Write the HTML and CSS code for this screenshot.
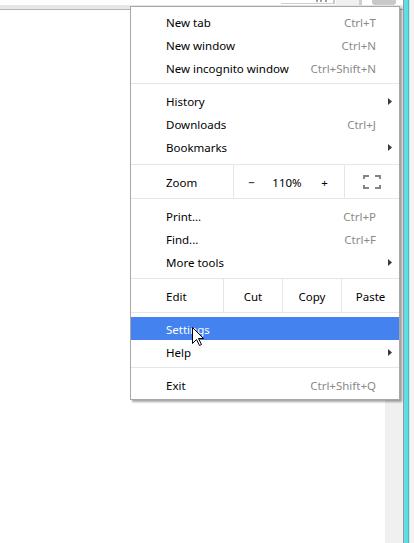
FILE: index.html
```html
<!DOCTYPE html>
<html>
<head>
<meta charset="utf-8">
<title>Menu</title>
<link rel="stylesheet" href="styles.css">
</head>
<body>
<div class="screen">
  <div class="toolbar">
    <div class="toolbar-top">
      <div class="omni-end">
        <svg class="dots" width="14" height="4" viewBox="0 0 14 4"><rect x="1" y="0" width="2" height="2"/><rect x="5" y="0" width="2" height="2"/><rect x="10" y="0" width="2" height="2"/></svg>
      </div>
      <div class="ext"></div>
      <div class="menu-btn"></div>
    </div>
    <div class="toolbar-band"></div>
  </div>
  <div class="body-area">
    <div class="content"></div>
    <div class="side-gray"></div>
  </div>
  <div class="teal"></div>
  <div class="side-edge"></div>
</div>

<div class="menu">
  <div class="item"><span class="label">New tab</span><span class="key">Ctrl+T</span><span class="sub"></span></div>
  <div class="item"><span class="label">New window</span><span class="key">Ctrl+N</span><span class="sub"></span></div>
  <div class="item"><span class="label">New incognito window</span><span class="key">Ctrl+Shift+N</span><span class="sub"></span></div>
  <div class="sep"></div>
  <div class="item"><span class="label">History</span><span class="key"></span><span class="sub"><svg class="arrow" width="4" height="7" viewBox="0 0 4 7"><polygon points="0,0 4,3.5 0,7"/></svg></span></div>
  <div class="item"><span class="label">Downloads</span><span class="key">Ctrl+J</span><span class="sub"></span></div>
  <div class="item"><span class="label">Bookmarks</span><span class="key"></span><span class="sub"><svg class="arrow" width="4" height="7" viewBox="0 0 4 7"><polygon points="0,0 4,3.5 0,7"/></svg></span></div>
  <div class="cellrow zoomrow">
    <div class="cell-label zoom-label">Zoom</div>
    <div class="zoomctl">
      <span class="zminus">−</span>
      <span class="zval">110%</span>
      <span class="zplus">+</span>
    </div>
    <div class="fullscreen">
      <svg width="18" height="14" viewBox="0 0 18 14">
        <path d="M0 0h6v2H2v2H0z M12 0h6v4h-2V2h-4z M18 14h-6v-2h4v-2h2z M0 14v-4h2v2h4v2z"/>
      </svg>
    </div>
  </div>
  <div class="item"><span class="label">Print...</span><span class="key">Ctrl+P</span><span class="sub"></span></div>
  <div class="item"><span class="label">Find...</span><span class="key">Ctrl+F</span><span class="sub"></span></div>
  <div class="item"><span class="label">More tools</span><span class="key"></span><span class="sub"><svg class="arrow" width="4" height="7" viewBox="0 0 4 7"><polygon points="0,0 4,3.5 0,7"/></svg></span></div>
  <div class="cellrow editrow">
    <div class="cell-label edit-label">Edit</div>
    <div class="ecell ecut">Cut</div>
    <div class="ecell ecopy">Copy</div>
    <div class="ecell epaste">Paste</div>
  </div>
  <div class="item selected"><span class="label">Settings</span><span class="key"></span><span class="sub"></span></div>
  <div class="item"><span class="label">Help</span><span class="key"></span><span class="sub"><svg class="arrow" width="4" height="7" viewBox="0 0 4 7"><polygon points="0,0 4,3.5 0,7"/></svg></span></div>
  <div class="sep"></div>
  <div class="item"><span class="label">Exit</span><span class="key">Ctrl+Shift+Q</span><span class="sub"></span></div>
</div>

<svg class="cursor" width="13" height="20" viewBox="0 0 13 20">
  <polygon points="0.5,0.5 0.5,16.5 4.5,12.5 7.5,18.5 9.5,17.5 6.5,11.5 11.5,11.5" fill="#fff" stroke="#000" stroke-width="1"/>
</svg>
</body>
</html>
```

FILE: styles.css
```css
* {
  box-sizing: border-box;
}

html, body {
  margin: 0;
  padding: 0;
  background: #ffffff;
}

body {
  width: 414px;
  height: 543px;
  overflow: hidden;
  position: relative;
  font-family: "Noto Sans", "Open Sans", sans-serif;
  font-size: 11.5px;
  color: #000;
}

.screen {
  display: grid;
  grid-template-columns: 403px 6px 5px;
  grid-template-rows: 10px 533px;
  width: 414px;
  height: 543px;
}

.toolbar {
  grid-column: 1;
  grid-row: 1;
  display: flex;
  flex-direction: column;
}

.toolbar-top {
  height: 5px;
  display: flex;
  justify-content: flex-end;
  padding-right: 7px;
  background: #ffffff;
}

.omni-end {
  width: 54px;
  height: 4px;
  border-bottom: 1px solid #cfcfcf;
  border-right: 2px solid #c8c8c8;
  display: flex;
  justify-content: flex-end;
  align-items: flex-start;
  padding-right: 4px;
}

.dots {
  display: block;
  fill: #a0a0a0;
}

.ext {
  width: 26px;
  height: 5px;
  background: #f0f0f0;
  border-right: 3px solid #cfcfcf;
  margin-left: 1px;
}

.menu-btn {
  width: 24px;
  height: 5px;
  margin-left: 10px;
  background: #c9c9c9;
  border-radius: 0 0 3px 3px;
}

.toolbar-band {
  height: 5px;
  background: #e6e6e6;
  border-bottom: 1px solid #b4b4b4;
}

.body-area {
  grid-column: 1;
  grid-row: 2;
  display: flex;
}

.content {
  flex: 1;
  background: #ffffff;
}

.side-gray {
  width: 18px;
  background: #f0f0f0;
}

.teal {
  grid-column: 2;
  grid-row: 1 / span 2;
  background: #5fdde2;
  border-left: 1px solid #8f9fa0;
  border-right: 1px solid #47b9bd;
}

.side-edge {
  grid-column: 3;
  grid-row: 1 / span 2;
  background: #f4f4f4;
  border-left: 1px solid #e2e2e2;
}

/* Menu */
.menu {
  position: absolute;
  left: 130px;
  top: 6px;
  width: 270px;
  height: 394px;
  background: #ffffff;
  border: 1px solid #a7a7a7;
  box-shadow: 2px 2px 2px rgba(0, 0, 0, 0.35);
  padding-top: 3px;
  padding-bottom: 2px;
  display: flex;
  flex-direction: column;
}

.item {
  display: flex;
  align-items: center;
  height: 23px;
  padding-left: 35px;
  padding-right: 7px;
  padding-top: 1px;
  white-space: nowrap;
}

.label {
  flex: 1;
}

.key {
  color: #8a8a8a;
}

.sub {
  width: 16px;
  display: flex;
  justify-content: flex-end;
  align-items: center;
}

.arrow {
  fill: #3a3a3a;
  display: block;
}

.item.selected {
  background: #4482f0;
  color: #ffffff;
}

.sep {
  height: 1px;
  background: #e6e6e6;
  margin: 4px 0 5px;
}

.cellrow {
  display: flex;
  height: 35px;
  border-top: 1px solid #e6e6e6;
  border-bottom: 1px solid #e6e6e6;
}

.zoomrow {
  margin: 6px 0 5px;
}

.editrow {
  margin: 5px 0 4px;
}

.cell-label {
  display: flex;
  align-items: center;
  padding-left: 35px;
  padding-top: 1px;
}

.zoom-label {
  width: 102px;
}

.edit-label {
  width: 92px;
}

.zoomctl {
  width: 111px;
  border-left: 1px solid #e6e6e6;
  display: grid;
  grid-template-columns: 35px 36px 39px;
  align-items: center;
  text-align: center;
  padding-top: 1px;
}

.fullscreen {
  width: 55px;
  border-left: 1px solid #e6e6e6;
  display: flex;
  align-items: center;
  padding-left: 18px;
}

.fullscreen svg {
  fill: #858585;
  display: block;
}

.ecell {
  display: flex;
  align-items: center;
  justify-content: center;
  border-left: 1px solid #e6e6e6;
  padding-top: 1px;
}

.ecut, .ecopy {
  width: 59px;
}

.epaste {
  width: 58px;
}

.cursor {
  position: absolute;
  left: 192px;
  top: 327px;
}
```
